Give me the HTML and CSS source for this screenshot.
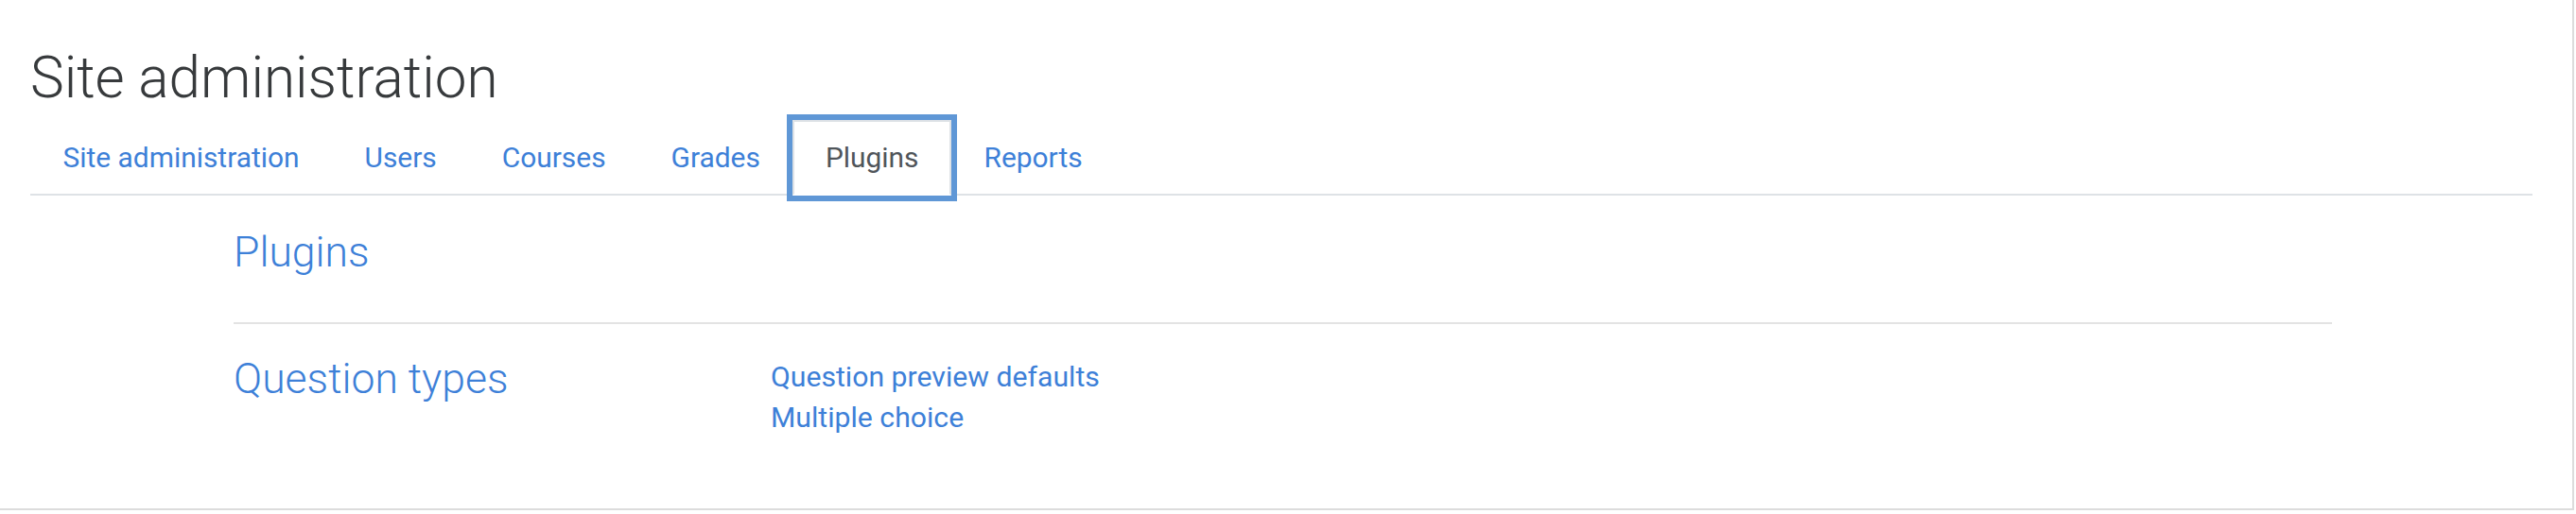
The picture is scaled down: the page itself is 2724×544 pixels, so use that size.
FILE: index.html
```html
<!DOCTYPE html>
<html lang="en">
<head>
<meta charset="utf-8">
<title>Site administration</title>
<link rel="stylesheet" href="styles.css">
</head>
<body>
<div class="card">
  <h2 class="page-title">Site administration</h2>
  <ul class="nav-tabs">
    <li class="nav-item"><a class="nav-link" href="#">Site administration</a></li>
    <li class="nav-item"><a class="nav-link" href="#">Users</a></li>
    <li class="nav-item"><a class="nav-link" href="#">Courses</a></li>
    <li class="nav-item"><a class="nav-link" href="#">Grades</a></li>
    <li class="nav-item"><a class="nav-link active" href="#">Plugins</a></li>
    <li class="nav-item"><a class="nav-link" href="#">Reports</a></li>
  </ul>
  <div class="content">
    <h3 class="section-title"><a href="#">Plugins</a></h3>
    <div class="section-row">
      <h3 class="section-title"><a href="#">Question types</a></h3>
      <ul class="link-list">
        <li><a href="#">Question preview defaults</a></li>
        <li><a href="#">Multiple choice</a></li>
      </ul>
    </div>
  </div>
</div>
</body>
</html>
```

FILE: styles.css
```css
html, body {
  margin: 0;
  padding: 0;
  background: #ffffff;
}

body {
  font-family: Roboto, "Liberation Sans", sans-serif;
  color: #373a3c;
}

a {
  color: #3d80d8;
  text-decoration: none;
}

.card {
  box-sizing: border-box;
  width: 2722px;
  height: 540px;
  padding: 46px 42px 0 32px;
  border-right: 2px solid #dcdcdc;
  border-bottom: 2px solid #dcdcdc;
  background: #ffffff;
}

.page-title {
  margin: 0 0 8px 0;
  font-size: 60.2px;
  font-weight: 300;
  line-height: 73px;
  color: #373a3c;
}

.nav-tabs {
  display: flex;
  margin: 0;
  padding: 0;
  list-style: none;
  border-bottom: 2px solid #dee2e6;
}

.nav-item {
  margin-bottom: -2px;
}

.nav-link {
  display: block;
  padding: 15px 32.5px;
  border: 2px solid transparent;
  font-size: 29.9px;
  line-height: 45.75px;
  color: #3d80d8;
}

.nav-link.active {
  color: #50555a;
  background: #ffffff;
  border-color: #dee2e6 #dee2e6 #ffffff;
  box-shadow: 0 0 0 6px #5f97d6;
}

.content {
  margin: 34px 212px 0 215px;
}

.section-title {
  margin: 0;
  font-size: 44.5px;
  font-weight: 300;
  line-height: 1.2;
}

.content > .section-title {
  padding-bottom: 47px;
  border-bottom: 2px solid #e3e3e3;
}

.section-row {
  display: grid;
  grid-template-columns: 568px 1fr;
  margin-top: 32px;
}

.link-list {
  margin: 2px 0 0 0;
  padding: 0;
  list-style: none;
  font-size: 30.2px;
  line-height: 43px;
}
```
